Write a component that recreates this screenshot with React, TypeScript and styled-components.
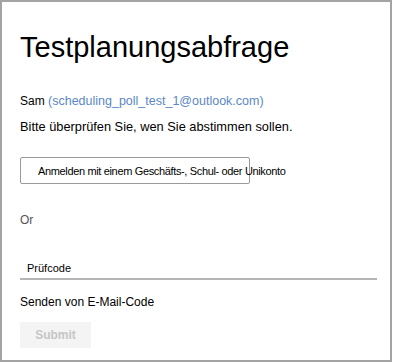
import React from 'react';
import styled, { createGlobalStyle } from 'styled-components';

const GlobalStyle = createGlobalStyle`
  html, body {
    margin: 0;
    padding: 0;
    background: #ffffff;
  }
  body {
    font-family: "Liberation Sans", Arial, sans-serif;
    color: #000000;
  }
`;

const Frame = styled.div`
  box-sizing: border-box;
  width: 392px;
  height: 362px;
  border: 2px solid #a3a3a3;
  background: #ffffff;
  padding: 28px 13px 0 18px;
  display: flex;
  flex-direction: column;
  align-items: flex-start;
`;

const Title = styled.h1`
  margin: 0;
  font-size: 29px;
  line-height: 34px;
  font-weight: 400;
  color: #000000;
`;

const UserLine = styled.div`
  margin-top: 29px;
  font-size: 12px;
  line-height: 16px;
  color: #000000;
`;

const Email = styled.span`
  font-size: 12.5px;
  color: #5b87c6;
`;

const Hint = styled.p`
  margin: 10px 0 0;
  font-size: 12.8px;
  line-height: 16px;
`;

const SignInButton = styled.button`
  box-sizing: border-box;
  margin-top: 22px;
  width: 230px;
  height: 27px;
  padding: 0 0 0 17px;
  border: 1px solid #9a9a9a;
  border-radius: 2px;
  background: #ffffff;
  font-family: inherit;
  font-size: 11px;
  letter-spacing: -0.35px;
  color: #000000;
  text-align: left;
  white-space: nowrap;
  overflow: visible;
`;

const OrLabel = styled.div`
  margin-top: 29px;
  font-size: 12px;
  line-height: 14px;
  color: #555555;
`;

const CodeField = styled.label`
  box-sizing: border-box;
  margin-top: 34px;
  width: 357px;
  padding: 0 0 3px 7px;
  border-bottom: 2px solid #b5b5b5;
  font-size: 11px;
  line-height: 14px;
  color: #000000;
`;

const SendCode = styled.div`
  margin-top: 15px;
  font-size: 12px;
  line-height: 14px;
`;

const SubmitButton = styled.button`
  margin-top: 13px;
  width: 71px;
  height: 26px;
  border: none;
  background: #f4f4f4;
  font-family: inherit;
  font-size: 12px;
  font-weight: 700;
  color: #c6c6c6;
  padding: 0;
`;

export default function App() {
  return (
    <>
      <GlobalStyle />
      <Frame>
        <Title>Testplanungsabfrage</Title>
        <UserLine>
          Sam <Email>(scheduling_poll_test_1@outlook.com)</Email>
        </UserLine>
        <Hint>Bitte überprüfen Sie, wen Sie abstimmen sollen.</Hint>
        <SignInButton>Anmelden mit einem Geschäfts-, Schul- oder Unikonto</SignInButton>
        <OrLabel>Or</OrLabel>
        <CodeField>Prüfcode</CodeField>
        <SendCode>Senden von E-Mail-Code</SendCode>
        <SubmitButton disabled>Submit</SubmitButton>
      </Frame>
    </>
  );
}
